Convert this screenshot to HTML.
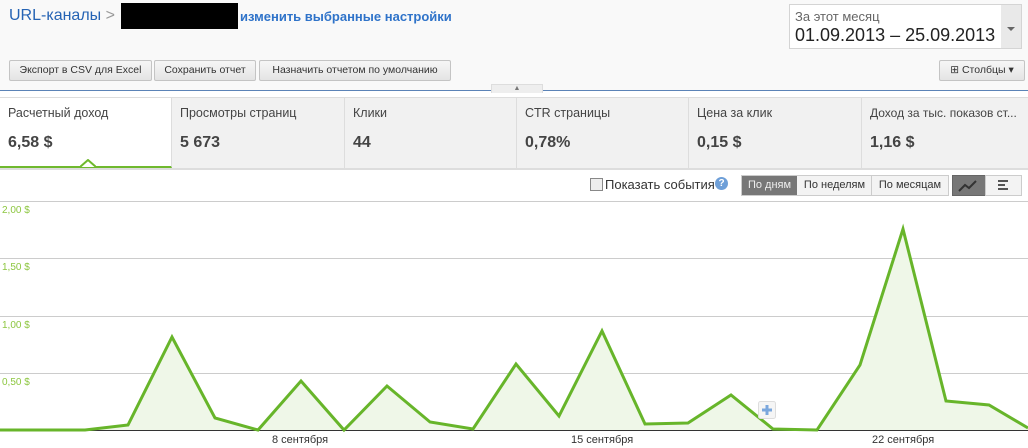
<!DOCTYPE html>
<html><head><meta charset="utf-8"><style>
body{margin:0;width:1028px;height:448px;overflow:hidden;font-family:"Liberation Sans",Arial,sans-serif;background:#fff;position:relative}
.top{position:absolute;left:0;top:0;width:1028px;height:90px;background:#f9f9f9;border-bottom:1px solid #5b83b7}
.btn{position:absolute;top:60px;height:19px;border:1px solid #c4c4c4;border-radius:2px;background:linear-gradient(#f6f6f6,#e4e4e4);font-size:10.5px;color:#333;line-height:19px;text-align:center;white-space:nowrap}
.tabs{position:absolute;top:97px;left:0;width:1028px;height:70px;background:#f1f1f1;border-top:1px solid #ddd;border-bottom:2px solid #ddd}
.tab{position:absolute;top:0;height:70px;border-right:1px solid #ddd}
.tab .l{position:absolute;left:8px;top:8px;font-size:12.5px;color:#444;white-space:nowrap}
.tab .v{position:absolute;left:8px;top:36px;font-size:16px;font-weight:bold;color:#444}
.ax{position:absolute;left:2px;font-size:10px;color:#8cc63f}
.xl{position:absolute;top:434px;font-size:11px;color:#333}
</style></head><body>
<div class="top">
<div style="position:absolute;left:9px;top:7px;font-size:16px;color:#2563b4">URL-каналы <span style="color:#999">&gt;</span></div>
<div style="position:absolute;left:121px;top:3px;width:117px;height:26px;background:#000"></div>
<div style="position:absolute;left:240px;top:9px;font-size:13px;font-weight:bold;color:#2f73c9">изменить выбранные настройки</div>
<div style="position:absolute;left:789px;top:4px;width:211px;height:43px;background:#fff;border:1px solid #d4d4d4"></div>
<div style="position:absolute;left:1001px;top:4px;width:20px;height:43px;background:#e9e9e9;border:1px solid #d4d4d4;border-left:0"><div style="position:absolute;left:6px;top:22px;border:4px solid transparent;border-top:4px solid #666;width:0;height:0"></div></div>
<div style="position:absolute;left:795px;top:9px;font-size:13px;color:#666">За этот месяц</div>
<div style="position:absolute;left:795px;top:25px;font-size:18px;color:#222">01.09.2013 – 25.09.2013</div>
<div class="btn" style="left:9px;width:141px">Экспорт в CSV для Excel</div>
<div class="btn" style="left:154px;width:100px">Сохранить отчет</div>
<div class="btn" style="left:259px;width:190px">Назначить отчетом по умолчанию</div>
<div class="btn" style="left:939px;width:84px">⊞ Столбцы ▾</div>
</div>
<div style="position:absolute;left:491px;top:84px;width:50px;height:8px;background:#eee;border:1px solid #ddd;border-bottom:0;font-size:7px;color:#777;text-align:center;line-height:8px">▲</div>
<div class="tabs">
<div class="tab" style="left:0;width:171px;background:#fff;height:68px;border-bottom:2px solid #6fb92e"><div class="l">Расчетный доход</div><div class="v">6,58 $</div>
<svg style="position:absolute;left:80px;top:61px" width="16" height="9"><path d="M0 8 L8 1 L16 8" fill="#fff" stroke="#6fb92e" stroke-width="2"/></svg></div>
<div class="tab" style="left:172px;width:172px"><div class="l">Просмотры страниц</div><div class="v">5 673</div></div>
<div class="tab" style="left:345px;width:171px"><div class="l">Клики</div><div class="v">44</div></div>
<div class="tab" style="left:517px;width:171px"><div class="l">CTR страницы</div><div class="v">0,78%</div></div>
<div class="tab" style="left:689px;width:172px"><div class="l">Цена за клик</div><div class="v">0,15 $</div></div>
<div class="tab" style="left:862px;width:166px;border:0"><div class="l" style="font-size:12px">Доход за тыс. показов ст...</div><div class="v">1,16 $</div></div>
</div>
<div style="position:absolute;left:590px;top:178px;width:11px;height:11px;border:1px solid #888;background:#eee"></div>
<div style="position:absolute;left:605px;top:177px;font-size:13px;color:#333">Показать события</div>
<div style="position:absolute;left:715px;top:177px;width:13px;height:13px;border-radius:50%;background:#6e9fd8;color:#fff;font-size:10px;font-weight:bold;text-align:center;line-height:13px">?</div>
<div style="position:absolute;left:741px;top:175px;width:206px;height:19px;border:1px solid #ccc;font-size:11px;line-height:19px;color:#333;background:#f3f3f3">
<span style="position:absolute;left:0;width:55px;background:#777;color:#eee;text-align:center">По дням</span>
<span style="position:absolute;left:56px;width:73px;text-align:center;border-right:1px solid #ccc">По неделям</span>
<span style="position:absolute;left:130px;width:76px;text-align:center">По месяцам</span></div>
<div style="position:absolute;left:952px;top:175px;width:32px;height:19px;background:#777;border:1px solid #666"></div>
<svg style="position:absolute;left:958px;top:178px" width="20" height="14"><path d="M1 13 L7 7 L11 10 L18 3" stroke="#333" stroke-width="2" fill="none"/></svg>
<div style="position:absolute;left:985px;top:175px;width:35px;height:19px;background:#f3f3f3;border:1px solid #ccc"><div style="position:absolute;left:12px;top:4px;width:10px;height:2px;background:#555"></div><div style="position:absolute;left:12px;top:8px;width:7px;height:2px;background:#555"></div><div style="position:absolute;left:12px;top:12px;width:10px;height:2px;background:#555"></div></div>
<div style="position:absolute;left:0;top:201px;width:1028px;height:1px;background:#ccc"></div>
<svg style="position:absolute;left:0;top:0" width="1028" height="448">
<g stroke="#ccc" stroke-width="1"><line x1="0" y1="258.5" x2="1028" y2="258.5"/><line x1="0" y1="316.5" x2="1028" y2="316.5"/><line x1="0" y1="373.5" x2="1028" y2="373.5"/></g>
<path d="M0 430 L85 430 L128 425 L172 337 L215 418 L258 430 L301 381 L344 430 L387 386 L430 422 L473 429 L516 364 L559 416 L602 331 L645 424 L688 423 L731 395 L773 429 L817 430 L860 365 L903 229 L946 401 L989 405 L1028 428 L1028 430 Z" fill="#eff7e8"/>
<line x1="0" y1="430.5" x2="1028" y2="430.5" stroke="#333"/>
<path d="M0 430 L85 430 L128 425 L172 337 L215 418 L258 430 L301 381 L344 430 L387 386 L430 422 L473 429 L516 364 L559 416 L602 331 L645 424 L688 423 L731 395 L773 429 L817 430 L860 365 L903 229 L946 401 L989 405 L1028 428" fill="none" stroke="#67b52a" stroke-width="3" stroke-linejoin="miter"/>
<rect x="758.5" y="401.5" width="17" height="17" rx="2" fill="#f5f5f5" stroke="#ddd"/>
<path d="M767 405 V415 M762 410 H772" stroke="#7aa7dd" stroke-width="3"/>
</svg>
<div class="ax" style="top:205px">2,00 $</div>
<div class="ax" style="top:262px">1,50 $</div>
<div class="ax" style="top:320px">1,00 $</div>
<div class="ax" style="top:377px">0,50 $</div>
<div class="xl" style="left:272px">8 сентября</div>
<div class="xl" style="left:571px">15 сентября</div>
<div class="xl" style="left:872px">22 сентября</div>
</body></html>
